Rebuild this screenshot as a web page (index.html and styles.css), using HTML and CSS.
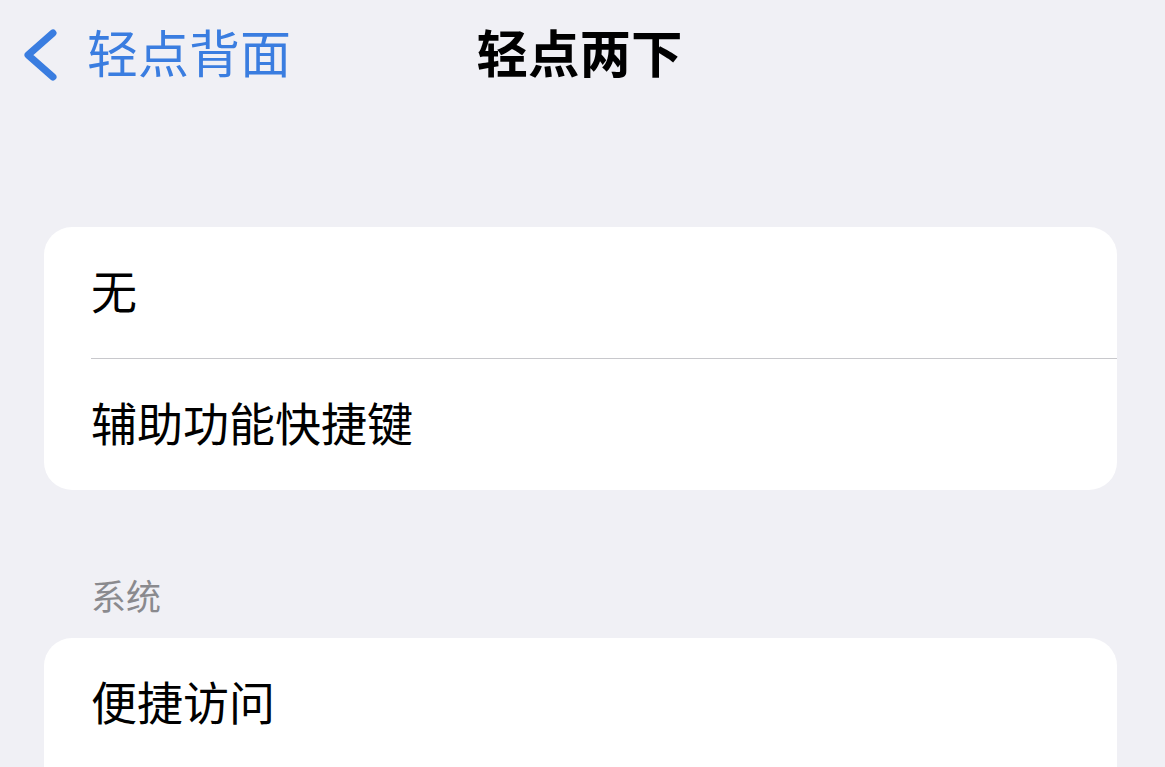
FILE: index.html
```html
<!DOCTYPE html>
<html lang="zh-CN">
<head>
<meta charset="utf-8">
<title>轻点两下</title>
<link rel="stylesheet" href="styles.css">
</head>
<body>
<div class="screen">
  <header class="nav">
    <div class="nav-left">
      <a class="back" href="#">
        <svg class="chevron" width="36" height="52" viewBox="0 0 36 52" aria-hidden="true">
          <path d="M31 4 L6 26 L31 48" fill="none" stroke="currentColor" stroke-width="7" stroke-linecap="round" stroke-linejoin="round"/>
        </svg>
        <span class="back-label">轻点背面</span>
      </a>
    </div>
    <h1 class="nav-title">轻点两下</h1>
    <div class="nav-right"></div>
  </header>

  <main class="content">
    <section class="group">
      <div class="row"><span class="row-label">无</span></div>
      <div class="row"><span class="row-label">辅助功能快捷键</span></div>
    </section>

    <h2 class="group-header">系统</h2>
    <section class="group group-tail">
      <div class="row"><span class="row-label">便捷访问</span></div>
    </section>
  </main>
</div>
</body>
</html>
```

FILE: styles.css
```css
html, body {
  margin: 0;
  padding: 0;
  background: #f0f0f5;
}

body {
  font-family: "Noto Sans CJK SC", "Noto Sans", sans-serif;
  color: #000;
  overflow: hidden;
  height: 767px;
}

.screen {
  width: 1165px;
}

.nav {
  height: 110px;
  display: grid;
  grid-template-columns: 1fr auto 1fr;
  align-items: center;
}

.nav-left {
  display: flex;
  align-items: center;
}

.back {
  display: flex;
  align-items: center;
  gap: 29px;
  padding-left: 22px;
  color: #3a7de0;
  text-decoration: none;
}

.chevron {
  display: block;
}

.back-label {
  font-size: 51px;
  line-height: 51px;
  padding-bottom: 8px;
  font-weight: 400;
}

.nav-title {
  margin: 0 0 0 -6px;
  font-size: 51.5px;
  line-height: 52px;
  padding-bottom: 8px;
  font-weight: 700;
}

.content {
  padding: 117px 48px 0 44px;
}

.group {
  background: #fff;
  border-radius: 28px;
  overflow: hidden;
}

.group-tail {
  min-height: 220px;
}

.row {
  height: 131px;
  box-sizing: border-box;
  display: flex;
  align-items: center;
  padding-left: 47px;
  padding-bottom: 8px;
}

.row + .row {
  height: 132px;
  border-top: 1px solid #c8c8cc;
  margin-left: 47px;
  padding-left: 0;
}

.row-label {
  font-size: 46px;
  line-height: 46px;
}

.group-header {
  margin: 87px 0 26px 47px;
  font-size: 35px;
  line-height: 35px;
  font-weight: 400;
  color: #8a8a8e;
}
```
